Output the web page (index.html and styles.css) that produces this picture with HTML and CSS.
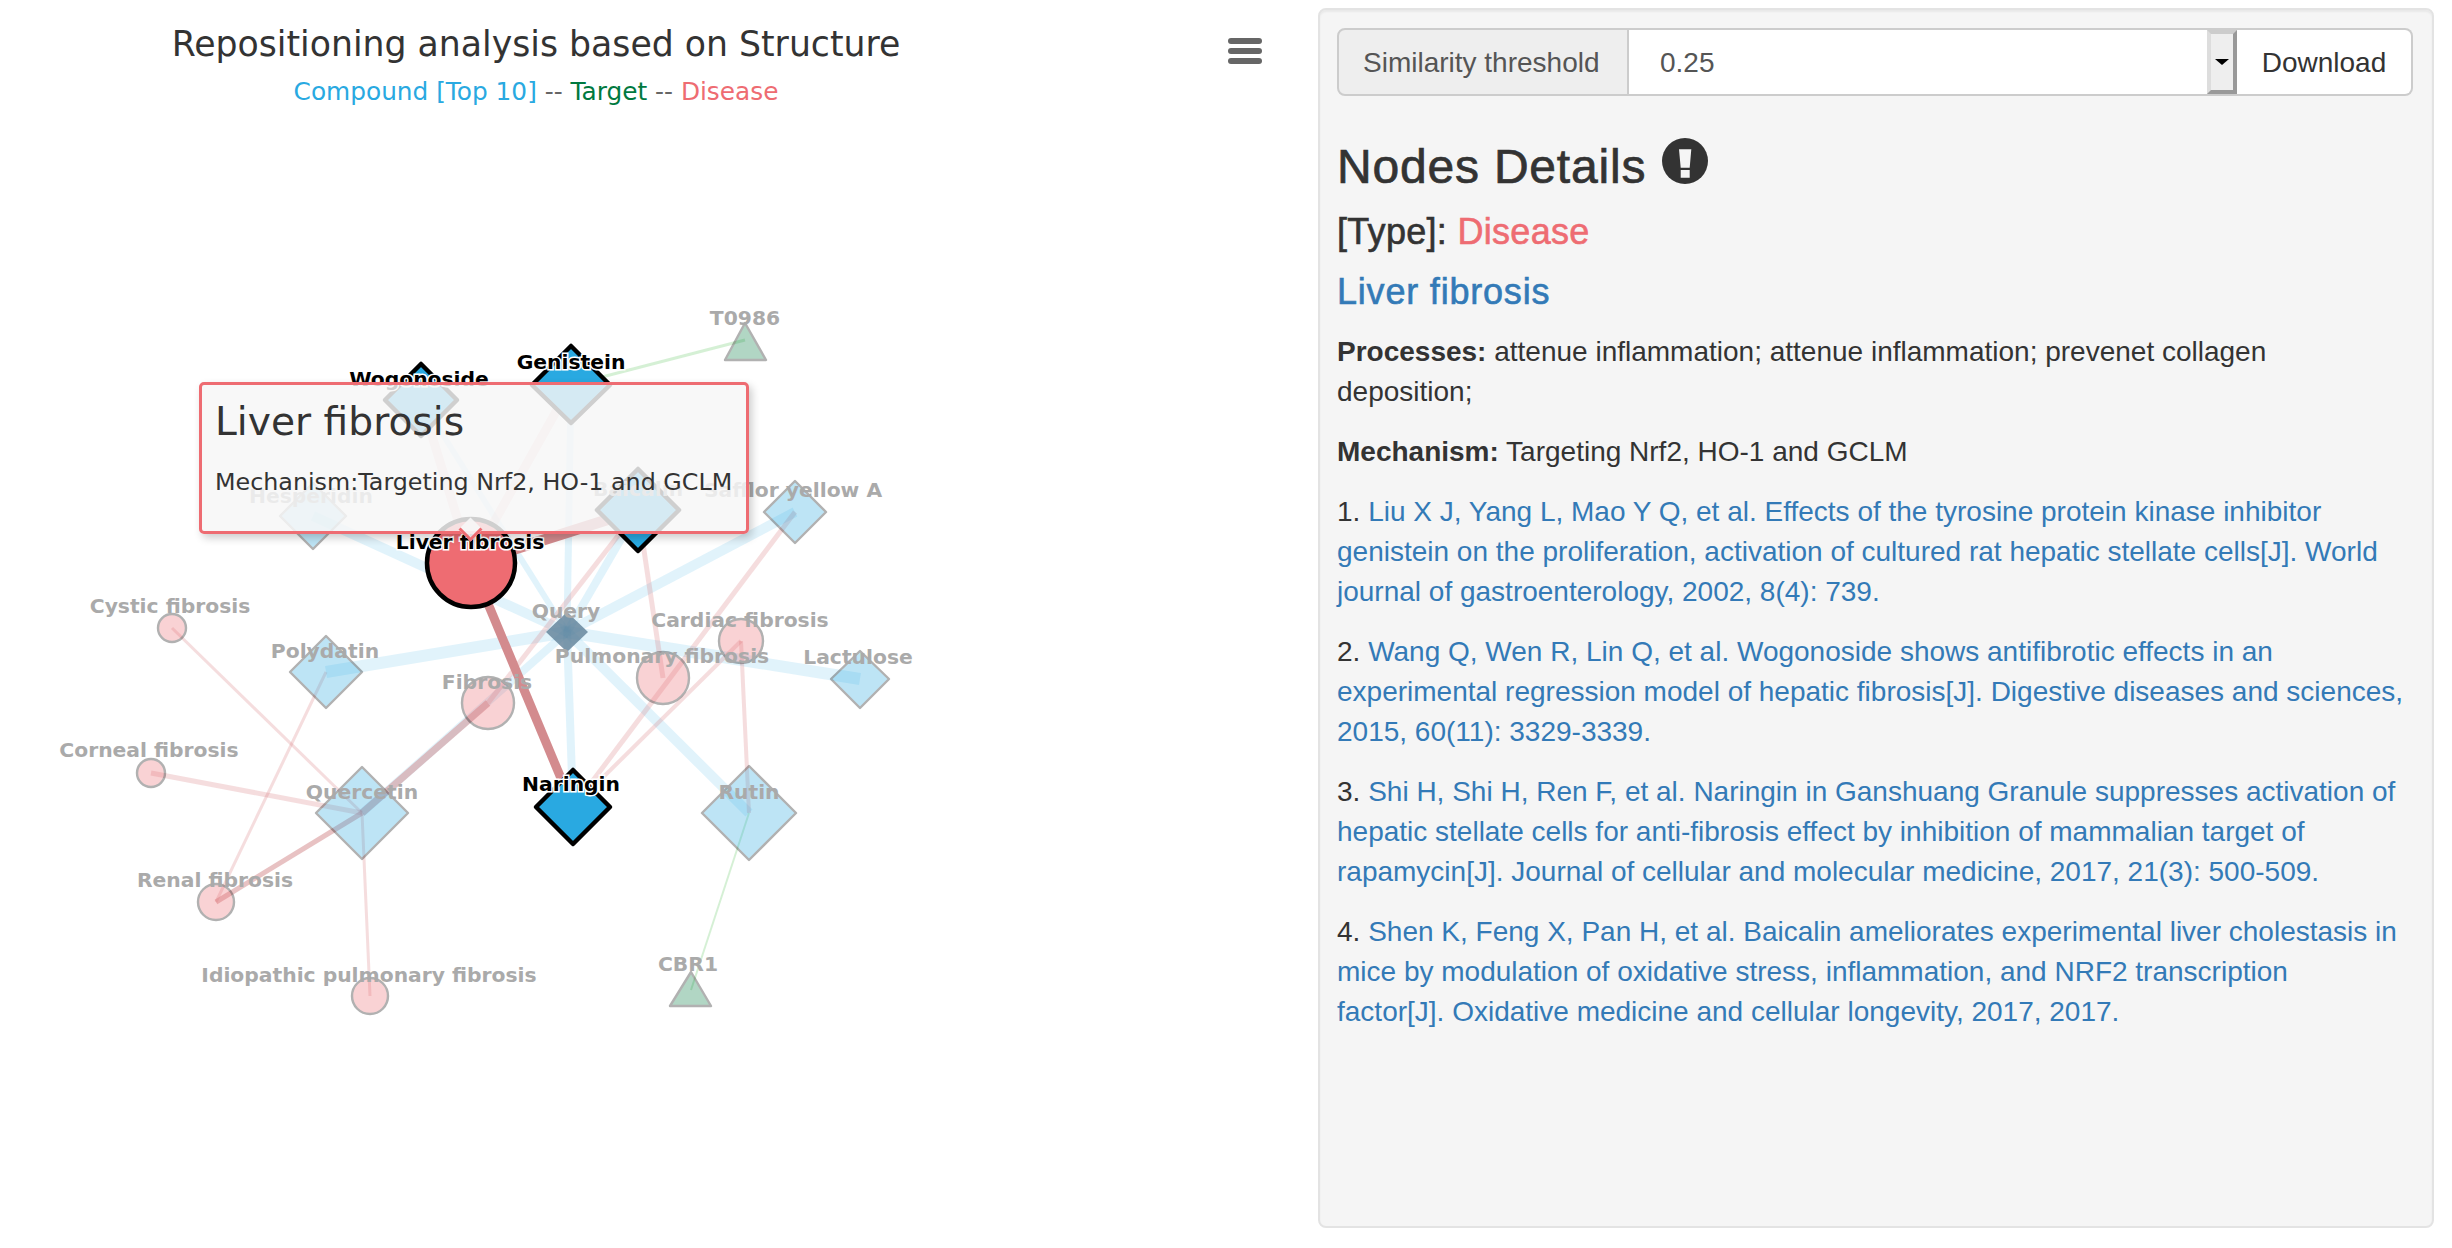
FILE: index.html
```html
<!DOCTYPE html>
<html lang="en">
<head>
<meta charset="utf-8">
<title>Repositioning analysis based on Structure</title>
<link rel="stylesheet" href="styles.css">
</head>
<body>
<main class="page">
  <section class="chart">
    <header class="chart-head">
      <h1 class="chart-title">Repositioning analysis based on Structure</h1>
      <p class="chart-sub"><span class="c-compound">Compound [Top 10]</span> -- <span class="c-target">Target</span> -- <span class="c-disease">Disease</span></p>
    </header>
    <div class="menu-icon"><span></span><span></span><span></span></div>
    <svg class="graph" viewBox="0 130 1318 1118" width="1318" height="1118">
      <g class="edges-blue">
        <line x1="567" y1="632" x2="326" y2="672" stroke-width="12"/>
        <line x1="567" y1="632" x2="860" y2="679" stroke-width="12"/>
        <line x1="567" y1="632" x2="749" y2="813" stroke-width="10"/>
        <line x1="567" y1="632" x2="795" y2="512" stroke-width="10"/>
        <line x1="567" y1="632" x2="313" y2="516" stroke-width="10"/>
        <line x1="567" y1="632" x2="573" y2="807" stroke-width="8"/>
        <line x1="567" y1="632" x2="638" y2="510" stroke-width="8"/>
        <line x1="567" y1="632" x2="571" y2="385" stroke-width="7"/>
        <line x1="567" y1="632" x2="421" y2="400" stroke-width="6"/>
        <line x1="567" y1="632" x2="362" y2="813" stroke-width="8"/>
      </g>
      <g class="edges-pink">
        <line x1="471" y1="563" x2="571" y2="385" stroke-width="9"/>
        <line x1="471" y1="563" x2="421" y2="400" stroke-width="9"/>
        <line x1="638" y1="510" x2="663" y2="678" stroke-width="5"/>
        <line x1="795" y1="512" x2="573" y2="807" stroke-width="5"/>
        <line x1="741" y1="641" x2="573" y2="807" stroke-width="4"/>
        <line x1="741" y1="641" x2="749" y2="813" stroke-width="4"/>
        <line x1="172" y1="628" x2="362" y2="813" stroke-width="3"/>
        <line x1="151" y1="773" x2="362" y2="813" stroke-width="5"/>
        <line x1="216" y1="902" x2="326" y2="672" stroke-width="3"/>
        <line x1="370" y1="996" x2="362" y2="813" stroke-width="3"/>
        <line x1="488" y1="703" x2="638" y2="510" stroke-width="5"/>
      </g>
      <g class="edges-strong">
        <line x1="471" y1="563" x2="573" y2="807" stroke-width="9"/>
        <line x1="471" y1="563" x2="638" y2="510" stroke-width="11"/>
      </g>
      <g class="edges-mid">
        <line x1="362" y1="813" x2="488" y2="703" stroke-width="7"/>
        <line x1="216" y1="902" x2="362" y2="813" stroke-width="5"/>
      </g>
      <g class="edges-green">
        <line x1="571" y1="385" x2="745" y2="340" stroke-width="3"/>
        <line x1="749" y1="813" x2="691" y2="990" stroke-width="2"/>
      </g>

      <polygon class="n-query" points="567,612 588,632 567,652 546,632"/>
      <g class="dim">
        <polygon class="n-compound" points="326,636 362,672 326,708 290,672"/>
        <polygon class="n-compound" points="860,651 889,679 860,708 831,679"/>
        <polygon class="n-compound" points="362,767 408,813 362,859 316,813"/>
        <polygon class="n-compound" points="749,766 796,813 749,860 702,813"/>
        <polygon class="n-compound" points="795,481 826,512 795,543 764,512"/>
        <polygon class="n-compound" points="313,483 346,516 313,549 280,516"/>
        <circle class="n-disease" cx="172" cy="628" r="14"/>
        <circle class="n-disease" cx="151" cy="773" r="14"/>
        <circle class="n-disease" cx="216" cy="902" r="18"/>
        <circle class="n-disease" cx="370" cy="996" r="18"/>
        <circle class="n-disease" cx="488" cy="703" r="26"/>
        <circle class="n-disease" cx="663" cy="678" r="26"/>
        <circle class="n-disease" cx="741" cy="641" r="22"/>
        <polygon class="n-target" points="745,323 766,360 725,360"/>
        <polygon class="n-target" points="691,972 711,1006 670,1006"/>
      </g>
      <g class="hot">
        <polygon class="n-compound" points="421,364 457,400 421,436 385,400"/>
        <polygon class="n-compound" points="571,346 610,385 571,423 532,385"/>
        <polygon class="n-compound" points="638,469 679,510 638,551 597,510"/>
        <polygon class="n-compound" points="573,770 610,807 573,844 536,807"/>
        <circle class="n-disease" cx="471" cy="563" r="44"/>
      </g>

      <g class="labels-dim">
        <text x="745" y="325">T0986</text>
        <text x="793" y="497">Safflor yellow A</text>
        <text x="638" y="496">Baicalin</text>
        <text x="311" y="503">Hesperidin</text>
        <text x="170" y="613">Cystic fibrosis</text>
        <text x="566" y="618">Query</text>
        <text x="740" y="627">Cardiac fibrosis</text>
        <text x="662" y="663">Pulmonary fibrosis</text>
        <text x="325" y="658">Polydatin</text>
        <text x="858" y="664">Lactulose</text>
        <text x="487" y="689">Fibrosis</text>
        <text x="149" y="757">Corneal fibrosis</text>
        <text x="362" y="799">Quercetin</text>
        <text x="749" y="799">Rutin</text>
        <text x="215" y="887">Renal fibrosis</text>
        <text x="369" y="982">Idiopathic pulmonary fibrosis</text>
        <text x="688" y="971">CBR1</text>
      </g>
      <g class="labels-hot">
        <text x="419" y="386">Wogonoside</text>
        <text x="571" y="369">Genistein</text>
        <text x="470" y="549">Liver fibrosis</text>
        <text x="571" y="791">Naringin</text>
      </g>
    </svg>
    <aside class="tooltip">
      <h2 class="tooltip-title">Liver fibrosis</h2>
      <p class="tooltip-text">Mechanism:Targeting Nrf2, HO-1 and GCLM</p>
    </aside>
  </section>

  <section class="well">
    <div class="input-group">
      <div class="addon">Similarity threshold</div>
      <div class="select"><span>0.25</span><span class="select-arrow"><i></i></span></div>
      <button class="btn" type="button">Download</button>
    </div>
    <h3 class="nodes-title">Nodes Details
      <svg class="alert-icon" viewBox="0 0 46 46" width="46" height="46"><circle cx="23" cy="23" r="23"/><path class="alert-mark" d="M17 11.3h12.3l-1.6 18.4h-9zM18.7 32h9v7.7h-9z"/></svg>
    </h3>
    <h4 class="type-line">[Type]: <span class="c-disease">Disease</span></h4>
    <h4 class="node-name"><a href="#">Liver fibrosis</a></h4>
    <p><strong>Processes:</strong> attenue inflammation; attenue inflammation; prevenet collagen<br>deposition;</p>
    <p><strong>Mechanism:</strong> Targeting Nrf2, HO-1 and GCLM</p>
    <p>1. <a href="#">Liu X J, Yang L, Mao Y Q, et al. Effects of the tyrosine protein kinase inhibitor genistein on the proliferation, activation of cultured rat hepatic stellate cells[J]. World journal of gastroenterology, 2002, 8(4): 739.</a></p>
    <p>2. <a href="#">Wang Q, Wen R, Lin Q, et al. Wogonoside shows antifibrotic effects in an experimental regression model of hepatic fibrosis[J]. Digestive diseases and sciences, 2015, 60(11): 3329-3339.</a></p>
    <p>3. <a href="#">Shi H, Shi H, Ren F, et al. Naringin in Ganshuang Granule suppresses activation of hepatic stellate cells for anti-fibrosis effect by inhibition of mammalian target of rapamycin[J]. Journal of cellular and molecular medicine, 2017, 21(3): 500-509.</a></p>
    <p>4. <a href="#">Shen K, Feng X, Pan H, et al. Baicalin ameliorates experimental liver cholestasis in mice by modulation of oxidative stress, inflammation, and NRF2 transcription<br>factor[J]. Oxidative medicine and cellular longevity, 2017, 2017.</a></p>
  </section>
</main>
</body>
</html>
```
FILE: styles.css
```css
* { box-sizing: border-box; }
html, body { margin: 0; padding: 0; background: #fff; }
body { font-family: "Liberation Sans", Arial, sans-serif; font-size: 28px; line-height: 40px; color: #333; overflow: hidden; }
.page { display: flex; width: 2452px; height: 1248px; align-items: flex-start; }

/* chart */
.chart { position: relative; flex: 0 0 1318px; width: 1318px; height: 1248px; font-family: "DejaVu Sans", sans-serif; }
.chart-head { width: 1072px; height: 130px; text-align: center; padding-top: 22px; }
.chart-title { margin: 0; font-size: 34.7px; line-height: 44px; font-weight: 400; color: #333; white-space: nowrap; }
.chart-sub { margin: 4px 0 0; font-size: 24.8px; line-height: 44px; color: #666; white-space: nowrap; }
.c-compound { color: #29a9e1; }
.c-target { color: #00793f; }
.c-disease { color: #ee6c72; }
.menu-icon { position: absolute; left: 1228px; top: 38px; width: 34px; display: flex; flex-direction: column; gap: 4px; }
.menu-icon span { height: 6px; border-radius: 3px; background: #666; }
.graph { display: block; }

.edges-blue line { stroke: #29a9e1; stroke-opacity: .14; }
.edges-pink line { stroke: #d9777b; stroke-opacity: .25; }
.edges-strong line { stroke: #d38b8e; }
.edges-mid line { stroke: #cf7f82; stroke-opacity: .48; }
.edges-green line { stroke: #b9e6b9; stroke-opacity: .6; }
.n-compound { fill: #29a9e1; }
.n-disease { fill: #ee6c72; }
.n-query { fill: #5f7f97; fill-opacity: .8; }
.n-target { fill: #00793f; }
.dim { opacity: .3; }
.dim polygon, .dim circle { stroke: #000; stroke-width: 2.4; stroke-linejoin: round; }
.hot polygon, .hot circle { stroke: #000; stroke-width: 4.5; stroke-linejoin: round; }
.labels-dim text, .labels-hot text { font-family: "DejaVu Sans", sans-serif; font-weight: 700; font-size: 20.3px; text-anchor: middle; }
.labels-dim text { fill: #aaa; }
.labels-hot text { fill: #000; stroke: #fff; stroke-width: 3px; paint-order: stroke; }

.tooltip { position: absolute; left: 199px; top: 382px; width: 550px; height: 152px; padding: 14px 13px; background: rgba(247,247,247,.84); border: 3px solid #ee6c72; border-radius: 5px; box-shadow: 3px 4px 8px rgba(0,0,0,.2); }
.tooltip::after { content: ""; position: absolute; left: 260px; top: 136px; width: 14px; height: 14px; background: rgba(247,247,247,.9); border: solid #ee6c72; border-width: 0 3px 3px 0; transform: rotate(45deg); }
.tooltip-title { margin: 0; font-size: 39.2px; line-height: 46px; font-weight: 400; color: #333; }
.tooltip-text { margin: 19px 0 0; font-size: 23.8px; line-height: 36px; color: #333; white-space: nowrap; }

/* details panel */
.well { flex: 0 0 1116px; width: 1116px; height: 1220px; margin-top: 8px; padding: 18px 17px; background: #f5f5f5; border: 2px solid #e3e3e3; border-radius: 8px; box-shadow: inset 0 2px 2px rgba(0,0,0,.05); }
.input-group { display: flex; height: 68px; width: 1076px; }
.addon { flex: 0 0 292px; padding: 1px 24px 0; line-height: 64px; color: #555; background: #eee; border: 2px solid #ccc; border-radius: 8px 0 0 8px; white-space: nowrap; }
.select { flex: 1; display: flex; justify-content: space-between; align-items: stretch; padding-left: 31px; background: #fff; border: solid #ccc; border-width: 2px 0; line-height: 66px; color: #555; }
.select-arrow { flex: 0 0 30px; display: flex; align-items: center; justify-content: center; background: #eee; border: 4px solid; border-color: #ccc #999 #999 #ddd; }
.select-arrow i { width: 0; height: 0; border: solid transparent; border-width: 6px 7px 0; border-top-color: #000; }
.btn { flex: 0 0 176px; padding: 2px 0 0; font: inherit; color: #333; background: #fff; border: 2px solid #ccc; border-left: 0; border-radius: 0 8px 8px 0; }
.nodes-title { margin: 42px 0 0; font-size: 48px; line-height: 53px; font-weight: 400; letter-spacing: .8px; -webkit-text-stroke: .7px #333; color: #333; white-space: nowrap; }
.alert-icon { vertical-align: -1px; margin-left: 2px; -webkit-text-stroke: 0; }
.alert-icon circle { fill: #333; }
.alert-mark { fill: #f5f5f5; }
h4 { margin: 0; font-size: 36px; line-height: 40px; font-weight: 400; -webkit-text-stroke: .6px currentColor; }
.type-line { margin-top: 19px; color: #333; letter-spacing: .3px; }
.node-name { margin-top: 20px; letter-spacing: .8px; }
a { color: #337ab7; text-decoration: none; }
p { margin: 0 0 20px; }
.node-name + p { margin-top: 20px; }
```
